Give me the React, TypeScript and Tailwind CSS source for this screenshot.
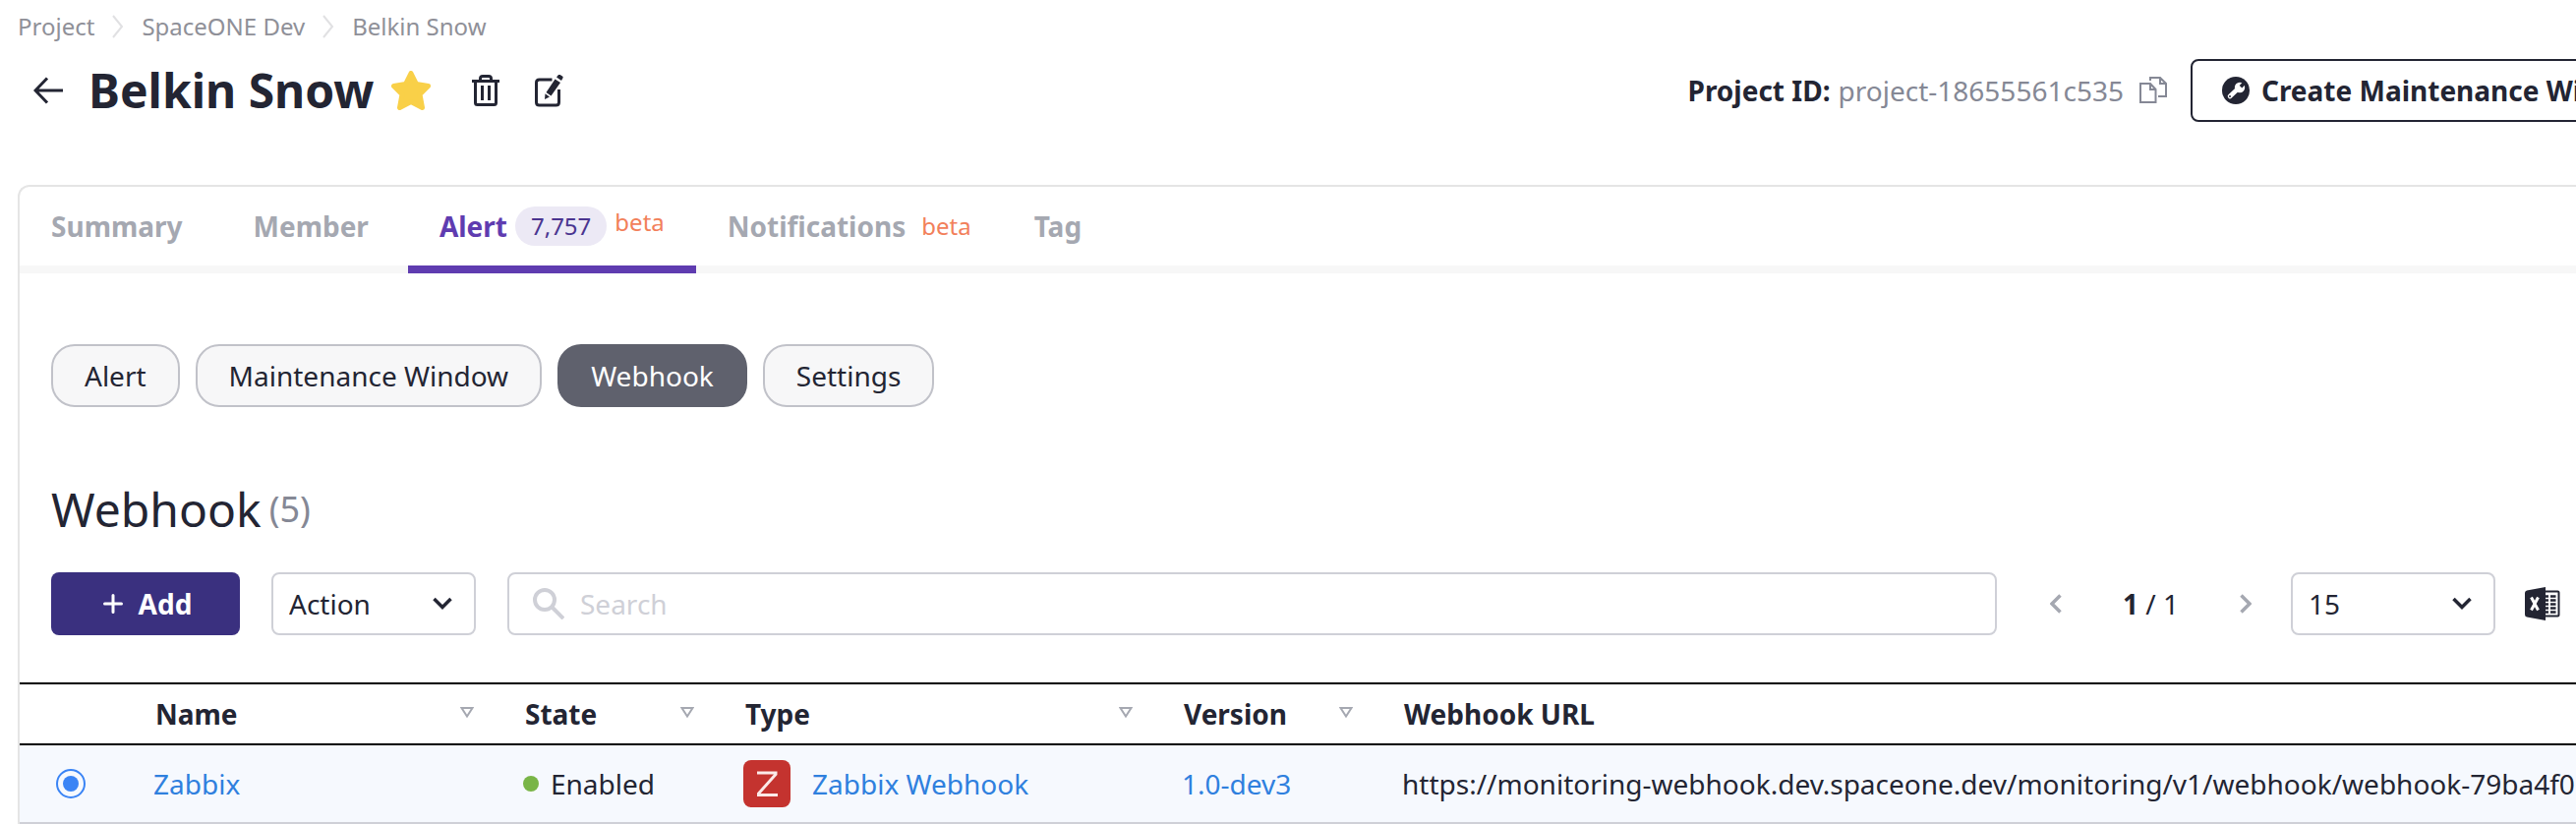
import React from "react";

const tabs = [
  { label: "Summary" },
  { label: "Member" },
  { label: "Alert", count: "7,757", beta: true, active: true },
  { label: "Notifications", beta: true },
  { label: "Tag" },
];

const filters = ["Alert", "Maintenance Window", "Webhook", "Settings"];

function Crumb() {
  return (
    <svg width="12" height="24" viewBox="0 0 12 24" fill="none" stroke="#e1e1e3" strokeWidth="2" aria-hidden="true">
      <path d="M1 1l9 11-9 11" />
    </svg>
  );
}

function ArrowLeft() {
  return (
    <svg width="30" height="28" viewBox="0 0 30 28" fill="none" stroke="#232533" strokeWidth="3" aria-hidden="true">
      <path d="M14 1.500L2 14l12 12.500M2 14h28" />
    </svg>
  );
}

function Star() {
  return (
    <svg width="40" height="40" viewBox="0 0 40 40" aria-hidden="true">
      <path
        d="M20 2.500L25.500 13.500 37.500 15.500 29 24 31.500 37.500 20 31.500 8.500 37.500 11 24 2.500 15.500 14.500 13.500z"
        fill="#f9d048"
        stroke="#f9d048"
        strokeWidth="5"
        strokeLinejoin="round"
      />
    </svg>
  );
}

function Trash() {
  return (
    <svg width="28" height="32" viewBox="0 0 28 32" fill="none" stroke="#232533" strokeWidth="3" aria-hidden="true">
      <path d="M0 6.500h28M8.500 6V4q0-2.500 2.500-2.500h6q2.500 0 2.500 2.500v2M3.500 7v21.500q0 2 2 2h17q2 0 2-2V7M10.500 11v15M17.500 11v15" />
    </svg>
  );
}

function Edit() {
  return (
    <svg width="29" height="33" viewBox="0 0 29 33" fill="none" stroke="#232533" strokeWidth="3" aria-hidden="true">
      <path d="M17.500 5H4.500q-3 0-3 3v20q0 3 3 3h17q3 0 3-3V15" />
      <path d="M22 2.500L24 0q1-.5 2 .2l2 1.300q1 .8.500 1.800L27 6zM20.500 4.500L26 8 16.500 21.500 11.500 18zM10.500 19.200L15 22.500 10 25z" fill="#232533" stroke="none" />
    </svg>
  );
}

function Copy() {
  return (
    <svg width="28" height="28" viewBox="0 0 28 28" fill="none" stroke="#858895" strokeWidth="2" aria-hidden="true">
      <path d="M1 7h10l5.500 6v13H1zM11 7v6h5.500M11 4V1h10l6 6v13h-8M21 1v6h6" />
    </svg>
  );
}

function Wrench() {
  return (
    <svg width="28" height="28" viewBox="0 0 28 28" aria-hidden="true">
      <circle cx="14" cy="14" r="14" fill="#232533" />
      <path d="M8 20L17 11.500" stroke="#fff" strokeWidth="4.500" strokeLinecap="round" />
      <circle cx="18" cy="11" r="5.200" fill="#fff" />
      <path d="M19 10.200L24 5" stroke="#232533" strokeWidth="3.600" />
      <circle cx="8" cy="20" r="1" fill="#232533" />
    </svg>
  );
}

function Plus() {
  return (
    <svg width="20" height="20" viewBox="0 0 20 20" stroke="#fff" strokeWidth="3" strokeLinecap="round" aria-hidden="true">
      <path d="M10 1.500v17M1.500 10h17" />
    </svg>
  );
}

function ChevronDown() {
  return (
    <svg className="pointer-events-none absolute right-6" width="20" height="14" viewBox="0 0 20 14" fill="none" stroke="#232533" strokeWidth="3.500" aria-hidden="true">
      <path d="M1.500 2l8.500 8.500L18.500 2" />
    </svg>
  );
}

function Search() {
  return (
    <svg width="32" height="32" viewBox="0 0 32 32" fill="none" stroke="#cfd0d7" strokeWidth="4" aria-hidden="true">
      <circle cx="12" cy="12" r="10" />
      <path d="M20 20l11 11" />
    </svg>
  );
}

function PageChevron({ next = false }: { next?: boolean }) {
  return (
    <svg width="12" height="20" viewBox="0 0 12 20" fill="none" stroke="#a5a8b1" strokeWidth="3.500" aria-hidden="true">
      <path d={next ? "M1.500 1.500l8.500 8.500-8.500 8.500" : "M10.500 1.500L2 10l8.500 8.500"} />
    </svg>
  );
}

function Excel() {
  return (
    <svg width="36" height="34" viewBox="0 0 36 34" aria-hidden="true">
      <path d="M20 4.500h13.500q1 0 1 1v23q0 1-1 1H20" fill="#fff" stroke="#232533" strokeWidth="2" />
      <path d="M20 9.500h4M26 9.500h5.500M20 13.500h4M26 13.500h5.500M20 17.500h4M26 17.500h5.500M20 21.500h4M26 21.500h5.500M20 25.500h4M26 25.500h5.500" stroke="#232533" strokeWidth="2.500" />
      <path d="M2 3.500L21 0v34L2 30.500Q0 30 0 28V6Q0 4 2 3.500z" fill="#232533" />
      <path d="M6.500 10.500l7 13M13.500 10.500l-7 13" stroke="#fff" strokeWidth="3" />
    </svg>
  );
}

function SortIcon() {
  return (
    <svg width="14" height="11" viewBox="0 0 14 11" fill="none" stroke="#a5a8b1" strokeWidth="2" aria-hidden="true">
      <path d="M1.500 1h11L7 9.500z" />
    </svg>
  );
}

function Th({ label, sortable = true }: { label: string; sortable?: boolean }) {
  return (
    <th scope="col" className="pr-[34px] pl-[18px] text-left font-bold">
      <div className="flex items-center justify-between">
        {label}
        {sortable && (
          <button aria-label={`Sort by ${label}`} className="pb-1">
            <SortIcon />
          </button>
        )}
      </div>
    </th>
  );
}

export default function App() {
  return (
    <div className="min-h-screen overflow-hidden bg-white pl-[18px] font-['Noto_Sans',sans-serif] text-[28px] leading-10 text-[#232533]">
      <nav aria-label="Breadcrumb" className="flex h-[54px] items-center gap-[18px] text-2xl text-[#8f9098]">
        <a href="#project">Project</a>
        <Crumb />
        <a href="#space">SpaceONE Dev</a>
        <Crumb />
        <a href="#belkin">Belkin Snow</a>
      </nav>

      <header className="flex h-[76px] items-center whitespace-nowrap">
        <button aria-label="Back" className="mr-[26px] ml-4">
          <ArrowLeft />
        </button>
        <h1 className="text-5xl font-bold">Belkin Snow</h1>
        <button aria-label="Favorite" className="ml-[18px]">
          <Star />
        </button>
        <button aria-label="Delete" className="ml-[42px]">
          <Trash />
        </button>
        <button aria-label="Edit" className="ml-9">
          <Edit />
        </button>
        <div className="-mr-[114px] ml-auto flex items-center">
          <strong className="mr-2">Project ID:</strong>
          <span className="text-[#858895]">project-18655561c535</span>
          <button aria-label="Copy project ID" className="mr-6 ml-4">
            <Copy />
          </button>
          <button className="flex h-16 items-center gap-3 rounded-lg border-2 border-[#232533] px-[30px] font-bold">
            <Wrench />
            Create Maintenance Window
          </button>
        </div>
      </header>

      <main className="mt-[58px] min-h-[650px] rounded-tl-xl border-t-2 border-l-2 border-[#e5e5e5]">
        <div role="tablist" className="flex h-[88px] border-b-8 border-[#f7f7f7] font-bold text-[#a5a8b1]">
          {tabs.map((tab) => (
            <button
              key={tab.label}
              role="tab"
              aria-selected={!!tab.active}
              className={
                tab.active
                  ? "-mb-2 flex items-center border-b-8 border-[#5f3cb0] px-8 text-[#5f3cb0]"
                  : "flex items-center px-8"
              }
            >
              <span className="mr-2">{tab.label}</span>
              {tab.count && (
                <span className="rounded-full bg-[#ece9f5] px-4 text-2xl leading-10 font-normal text-[#4a3590]">{tab.count}</span>
              )}
              {tab.beta && (
                <span className={tab.active ? "ml-2 pb-2 text-2xl font-normal text-[#f2805a]" : "ml-2 text-2xl font-normal text-[#f2805a]"}>
                  beta
                </span>
              )}
            </button>
          ))}
        </div>

        <div className="mt-[72px] flex gap-4 px-8">
          {filters.map((f) => (
            <button
              key={f}
              className={
                f === "Webhook"
                  ? "h-16 rounded-3xl bg-[#5f616d] px-[34px] text-white"
                  : "h-16 rounded-3xl border-2 border-[#c1c2c9] bg-[#f7f7f8] px-8"
              }
            >
              {f}
            </button>
          ))}
        </div>

        <h2 className="mt-[74px] flex items-center gap-2 px-8 text-5xl leading-[60px]">
          Webhook <span className="text-4xl text-[#858895]">(5)</span>
        </h2>

        <div className="mt-[34px] flex items-center px-8">
          <button className="flex h-16 w-48 items-center justify-center gap-4 rounded-lg bg-[#3a307f] pl-1 font-bold text-white">
            <Plus />
            Add
          </button>
          <div className="relative ml-8 flex w-52 items-center">
            <select aria-label="Action" className="h-16 w-full appearance-none rounded-lg border-2 border-[#cfd0d7] bg-white px-4">
              <option>Action</option>
            </select>
            <ChevronDown />
          </div>
          <label className="ml-8 flex h-16 flex-1 items-center gap-4 rounded-lg border-2 border-[#cfd0d7] px-6">
            <Search />
            <input type="text" aria-label="Search" placeholder="Search" className="min-w-0 flex-1 outline-none placeholder:text-[#cfd0d7]" />
          </label>
          <div className="ml-[54px] flex items-center">
            <button aria-label="Previous page">
              <PageChevron />
            </button>
            <span className="mx-[62px] whitespace-nowrap">
              <b>1</b> / 1
            </span>
            <button aria-label="Next page">
              <PageChevron next />
            </button>
          </div>
          <div className="relative ml-10 flex w-52 items-center">
            <select aria-label="Page size" className="h-16 w-full appearance-none rounded-lg border-2 border-[#cfd0d7] bg-white px-4">
              <option>15</option>
            </select>
            <ChevronDown />
          </div>
          <button aria-label="Export to Excel" className="-mr-4 ml-[30px]">
            <Excel />
          </button>
        </div>

        <table className="mt-12 w-full table-fixed border-collapse whitespace-nowrap">
          <colgroup>
            <col className="w-[120px]" />
            <col className="w-[376px]" />
            <col className="w-[224px]" />
            <col className="w-[446px]" />
            <col className="w-[224px]" />
            <col />
          </colgroup>
          <thead>
            <tr className="h-[62px] border-y-2 border-black">
              <td />
              <Th label="Name" />
              <Th label="State" />
              <Th label="Type" />
              <Th label="Version" />
              <Th label="Webhook URL" sortable={false} />
            </tr>
          </thead>
          <tbody>
            <tr className="h-20 border-b-2 border-[#cfd0d7] bg-[#f6f9fe]">
              <td className="pl-[37px]">
                <input
                  type="radio"
                  aria-label="Select Zabbix"
                  defaultChecked
                  className="block size-[30px] appearance-none rounded-full border-2 border-[#3a84f5] bg-[#3a84f5] bg-clip-content p-[5px]"
                />
              </td>
              <td className="px-4">
                <a href="#zabbix" className="text-[#2f80de]">Zabbix</a>
              </td>
              <td className="px-4">
                <span className="flex items-center gap-3">
                  <span className="size-4 rounded-full bg-[#79b547]" />
                  Enabled
                </span>
              </td>
              <td className="px-4">
                <span className="flex items-center gap-[22px]">
                  <svg width="48" height="48" viewBox="0 0 48 48" aria-hidden="true">
                    <rect width="48" height="48" rx="8" fill="#c4332f" />
                    <path d="M14 13h19v1.500L15.500 34v1.500H35" fill="none" stroke="#fbe9e8" strokeWidth="3" />
                  </svg>
                  <a href="#type" className="text-[#2f80de]">Zabbix Webhook</a>
                </span>
              </td>
              <td className="px-4">
                <a href="#version" className="text-[#2f80de]">1.0-dev3</a>
              </td>
              <td className="overflow-hidden px-4">
                https://monitoring-webhook.dev.spaceone.dev/monitoring/v1/webhook/webhook-79ba4f0
              </td>
            </tr>
          </tbody>
        </table>
      </main>
    </div>
  );
}
